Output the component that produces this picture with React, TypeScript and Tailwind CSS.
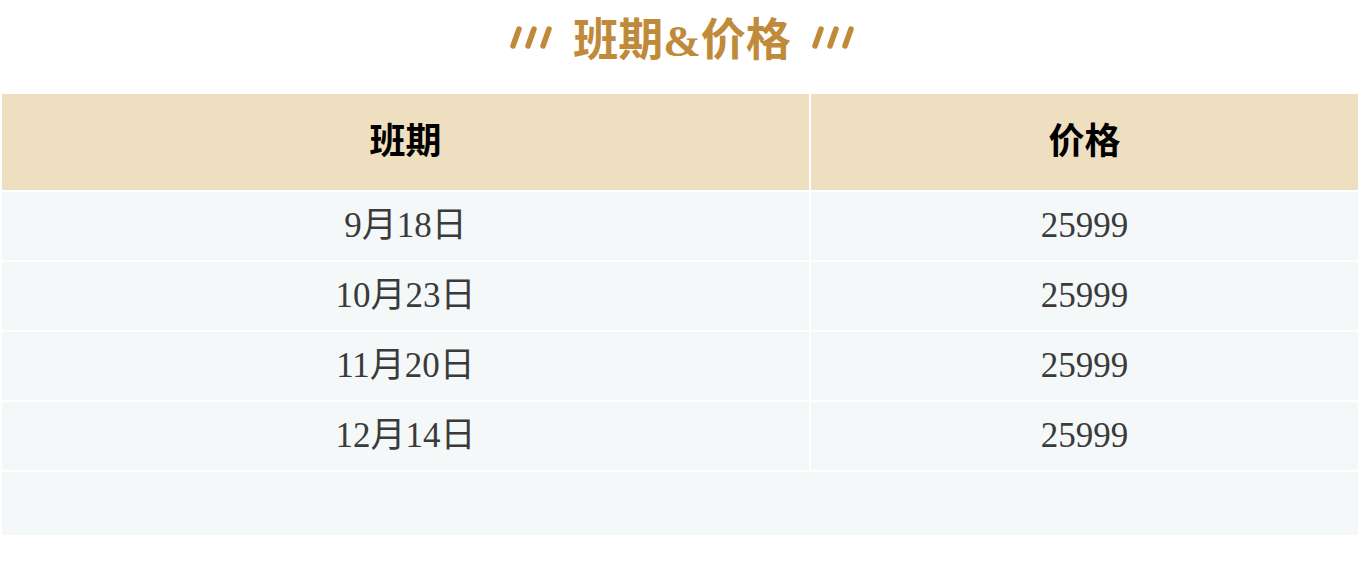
const rows = [
  { date: '9月18日', price: '25999' },
  { date: '10月23日', price: '25999' },
  { date: '11月20日', price: '25999' },
  { date: '12月14日', price: '25999' },
];

function Slashes() {
  return (
    <svg width="44" height="26" viewBox="0 0 44 26" className="shrink-0">
      <g stroke="#c08a3b" strokeWidth="5.5" strokeLinecap="round">
        <line x1="10" y1="4" x2="4" y2="21" />
        <line x1="25" y1="4" x2="19" y2="21" />
        <line x1="40" y1="4" x2="34" y2="21" />
      </g>
    </svg>
  );
}

export default function App() {
  return (
    <div className="w-[1364px] h-[572px] bg-white" style={{ fontFamily: '"Liberation Serif", "Noto Sans CJK SC", serif' }}>
      {/* Title */}
      <div className="h-[94px] flex items-start justify-center pt-[10px] gap-[20px]">
        <div className="pt-[15px]">
          <Slashes />
        </div>
        <h2 className="text-[45px] leading-[54px] font-bold text-[#c08a3b]" style={{ fontFamily: '"Noto Sans CJK SC", sans-serif' }}>
          班期<span style={{ fontFamily: '"Liberation Serif", serif' }}>&amp;</span>价格
        </h2>
        <div className="pt-[15px]">
          <Slashes />
        </div>
      </div>

      {/* Table */}
      <div className="mx-[2px] w-[1356px] grid grid-cols-[807px_547px] gap-[2px]">
        <div className="h-[96px] pb-[8px] bg-[#efdfc1] flex items-center justify-center text-[36px] font-bold text-black" style={{ fontFamily: '"Noto Sans CJK SC", sans-serif' }}>
          班期
        </div>
        <div className="h-[96px] pb-[8px] bg-[#efdfc1] flex items-center justify-center text-[36px] font-bold text-black" style={{ fontFamily: '"Noto Sans CJK SC", sans-serif' }}>
          价格
        </div>
        {rows.map((r) => (
          <>
            <div key={r.date + 'd'} className="h-[68px] bg-[#f4f8f9] flex items-center justify-center text-[35px] text-[#3a3a3a]">
              {r.date}
            </div>
            <div key={r.date + 'p'} className="h-[68px] bg-[#f4f8f9] flex items-center justify-center text-[35px] text-[#3a3a3a]">
              {r.price}
            </div>
          </>
        ))}
        <div className="col-span-2 h-[63px] bg-[#f4f8f9]" />
      </div>
    </div>
  );
}
